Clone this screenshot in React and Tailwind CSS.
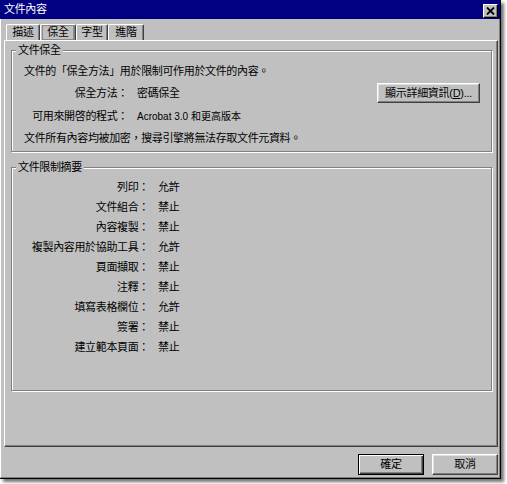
import React from 'react';

const RESTRICTIONS = [
  ['列印', '允許'],
  ['文件組合', '禁止'],
  ['內容複製', '禁止'],
  ['複製內容用於協助工具', '允許'],
  ['頁面擷取', '禁止'],
  ['注釋', '禁止'],
  ['填寫表格欄位', '允許'],
  ['簽署', '禁止'],
  ['建立範本頁面', '禁止'],
];

const TABS = [
  { label: '描述', width: 'w-[34px]' },
  { label: '保全', width: 'w-[36px]', active: true },
  { label: '字型', width: 'w-[32px]' },
  { label: '進階', width: 'w-[36px]' },
];

const FONT = "font-[family-name:'Liberation_Sans','Noto_Sans_CJK_TC',sans-serif]";

function WinButton({ children, isDefault, className = '' }) {
  return (
    <button
      className={
        'flex items-center justify-center bg-[#c0c0c0] text-black text-[11px] leading-none tracking-[-0.3px] ' +
        (isDefault
          ? 'border border-black shadow-[inset_1px_1px_0_#fff,inset_-1px_-1px_0_#404040,inset_-2px_-2px_0_#808080] '
          : 'border border-t-white border-l-white border-r-[#404040] border-b-[#404040] shadow-[inset_-1px_-1px_0_#808080,inset_1px_1px_0_#dfdfdf] ') +
        className
      }
    >
      {children}
    </button>
  );
}

function GroupBox({ title, className = '', children }) {
  return (
    <fieldset
      className={
        'border border-[#808080] shadow-[inset_1px_1px_0_#fff,1px_1px_0_#fff] px-0 ' + className
      }
    >
      <legend className="ml-[4px] px-[2px] bg-[#c0c0c0] text-[11px] leading-[14px]">{title}</legend>
      {children}
    </fieldset>
  );
}

export default function App() {
  return (
    <div className={'w-[507px] h-[484px] bg-white ' + FONT}>
      <div className="w-[501px] h-[479px] flex flex-col bg-[#c0c0c0] border-r border-b border-black shadow-[3px_3px_3px_rgba(0,0,0,0.55)] text-black tracking-[-0.35px]">
        {/* Title bar */}
        <div className="h-[19px] shrink-0 bg-[#000080] flex items-center pl-[4px] pr-[2px]">
          <span className="text-white text-[11px] leading-none">文件內容</span>
          <button className="ml-auto mt-[2px] w-[15px] h-[14px] flex items-center justify-center bg-[#c0c0c0] border border-t-white border-l-white border-r-black border-b-black shadow-[inset_-1px_-1px_0_#808080]">
            <svg width="9" height="8" viewBox="0 0 9 8">
              <path d="M1 0.5 L8 7.5 M8 0.5 L1 7.5" stroke="black" strokeWidth="1.8" />
            </svg>
          </button>
        </div>

        {/* Body */}
        <div className="flex-1 flex flex-col border-l border-l-white border-r border-r-[#808080] border-b border-b-[#808080] pl-[3px] pr-[1px] pt-[5px]">
          {/* Tabs */}
          <div className="flex h-[16px] ml-[2px] shrink-0">
            {TABS.map((t) => (
              <div
                key={t.label}
                className={
                  t.width +
                  ' h-full flex items-center justify-center text-[11px] leading-none border-t border-l border-t-white border-l-white border-r border-r-[#404040] rounded-t-[2px] shadow-[inset_-1px_0_0_#808080]'
                }
              >
                {t.active ? (
                  <span className="w-full h-full flex items-center justify-center border border-[#8a8a8a] ml-[1px] mr-[1px]">
                    {t.label}
                  </span>
                ) : (
                  t.label
                )}
              </div>
            ))}
          </div>

          {/* Tab panel */}
          <div className="h-[407px] w-[494px] shrink-0 flex flex-col border border-t-white border-l-white border-r-[#404040] border-b-[#404040] shadow-[inset_-1px_-1px_0_#808080] px-[6px] pt-[2px]">
            <GroupBox title="文件保全" className="h-[109px] mr-[0px] w-[481px]">
              <div className="pl-[12px] pr-[11px] pt-[4px] text-[11px] leading-none">
                <div className="h-[20px] flex items-center">文件的「保全方法」用於限制可作用於文件的內容。</div>
                <div className="h-[24px] flex items-center">
                  <span className="w-[104px] text-right">保全方法：</span>
                  <span className="ml-[9px]">密碼保全</span>
                  <WinButton className="ml-auto w-[103px] h-[20px]">
                    顯示詳細資訊(<span className="underline">D</span>)...
                  </WinButton>
                </div>
                <div className="h-[23px] flex items-center">
                  <span className="w-[104px] text-right">可用來開啓的程式：</span>
                  <span className="ml-[9px] text-[10px] tracking-[0px]">Acrobat 3.0 和更高版本</span>
                </div>
                <div className="h-[20px] flex items-center">文件所有內容均被加密，搜尋引擎將無法存取文件元資料。</div>
              </div>
            </GroupBox>

            <GroupBox title="文件限制摘要" className="mt-[8px] h-[231px] w-[481px]">
              <div className="pl-[12px] pt-[3px] text-[11px] leading-none">
                {RESTRICTIONS.map(([label, value]) => (
                  <div key={label} className="h-[20px] flex items-center">
                    <span className="w-[125px] text-right">{label}：</span>
                    <span className="ml-[9px]">{value}</span>
                  </div>
                ))}
              </div>
            </GroupBox>
          </div>

          {/* Dialog buttons */}
          <div className="flex justify-end gap-[8px] mt-[7px]">
            <WinButton isDefault className="w-[66px] h-[21px]">確定</WinButton>
            <WinButton className="w-[66px] h-[21px]">取消</WinButton>
          </div>
        </div>
      </div>
    </div>
  );
}
